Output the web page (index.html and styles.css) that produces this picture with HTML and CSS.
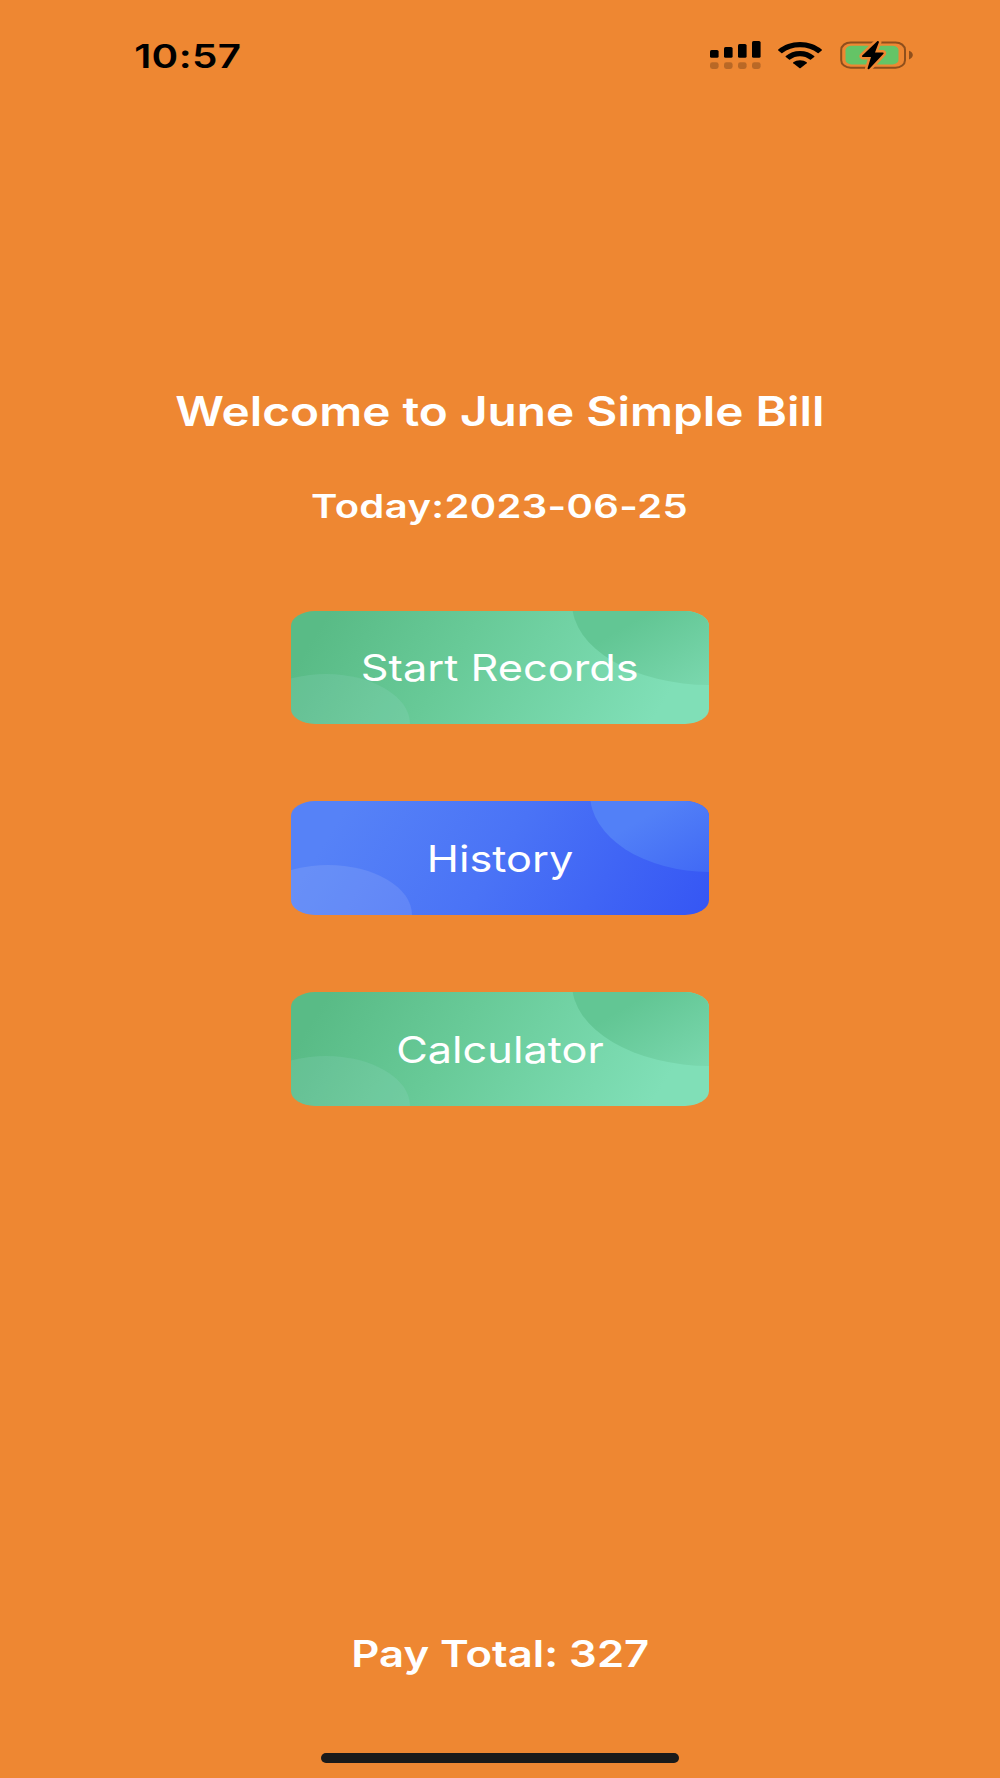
FILE: index.html
```html
<!DOCTYPE html>
<html lang="en">
<head>
<meta charset="utf-8">
<title>June Simple Bill</title>
<link rel="stylesheet" href="styles.css">
</head>
<body>
<div class="screen">
  <header class="status">
    <span class="wide time">10:57</span>
    <div class="status-icons">
      <svg class="signal" viewBox="0 0 51 28" width="51" height="28">
        <rect x="0" y="9" width="8.6" height="7.8" rx="1.6"/>
        <rect x="14" y="6" width="8.6" height="10.8" rx="1.6"/>
        <rect x="28" y="3" width="8.6" height="13.8" rx="1.6"/>
        <rect x="42" y="0" width="8.6" height="16.8" rx="1.6"/>
        <g opacity=".22">
          <rect x="0" y="21.2" width="8.6" height="6.800" rx="2.400"/>
          <rect x="14" y="21.2" width="8.6" height="6.800" rx="2.400"/>
          <rect x="28" y="21.2" width="8.6" height="6.800" rx="2.400"/>
          <rect x="42" y="21.2" width="8.6" height="6.800" rx="2.400"/>
        </g>
      </svg>
      <svg class="wifi" viewBox="0 0 44 27" width="44" height="27">
        <path d="M22 0C30.500 0 38.200 2.900 43.700 7.500Q44.300 8 43.700 8.500L40.700 11Q40.200 11.400 39.600 10.900C34.900 7.200 28.700 5.200 22 5.200S9.100 7.200 4.400 10.900Q3.800 11.400 3.300 11L.3 8.500Q-.3 8 .3 7.500C5.800 2.900 13.500 0 22 0Z"/>
        <path d="M22 9C27.600 9 32.500 10.900 36.200 14Q36.800 14.500 36.200 15L33 17.600Q32.500 18 31.900 17.600C29.100 15.500 25.700 14.300 22 14.300S14.900 15.500 12.100 17.600Q11.500 18 11 17.600L7.800 15Q7.200 14.500 7.800 14C11.500 10.900 16.400 9 22 9Z"/>
        <path d="M22 18.200C24.600 18.200 26.900 19 28.700 20.300Q29.300 20.800 28.700 21.300L22.700 26Q22 26.500 21.300 26L15.300 21.300Q14.700 20.800 15.300 20.300C17.100 19 19.400 18.200 22 18.200Z"/>
      </svg>
      <svg class="battery" viewBox="0 0 74 30" width="74" height="30">
        <rect x="1.200" y="2.400" width="63.800" height="25.400" rx="9.500" ry="7.600" fill="none" stroke="#8f4f1c" stroke-width="2"/>
        <path d="M69 10.800Q72.800 12.200 72.800 15.100T69 19.400Z" fill="#8f4f1c"/>
        <rect x="5.500" y="5.800" width="53" height="18.600" rx="6" ry="4.500" fill="#64c466"/>
        <path d="M37.500 1 22 15.800Q21.500 17 23 17H31L27.500 28.500Q28.200 29.800 29.200 29L43.500 13.800Q44.200 12.400 42.500 12.400H35L39 2Q38.500 .5 37.500 1Z" fill="#000" stroke="#ee8732" stroke-width="5" stroke-linejoin="round" paint-order="stroke"/>
      </svg>
    </div>
  </header>

  <main class="home">
    <h1 class="title"><span class="wide">Welcome to June Simple Bill</span></h1>
    <p class="today"><span class="wide">Today:2023-06-25</span></p>
    <nav class="actions">
      <button class="action green"><span class="wide">Start Records</span></button>
      <button class="action blue"><span class="wide">History</span></button>
      <button class="action green"><span class="wide">Calculator</span></button>
    </nav>
  </main>

  <footer class="footer">
    <p class="total"><span class="wide">Pay Total: 327</span></p>
    <div class="home-bar"></div>
  </footer>
</div>
</body>
</html>
```
FILE: styles.css
```css
* {
  box-sizing: border-box;
  margin: 0;
  padding: 0;
}

body {
  background: #ee8732;
  font-family: Inter, "Liberation Sans", sans-serif;
}

.screen {
  display: flex;
  flex-direction: column;
  height: 1778px;
  color: #fff;
}

.wide {
  display: inline-block;
  white-space: nowrap;
  transform: scaleX(1.18);
}

.status {
  display: flex;
  justify-content: space-between;
  align-items: flex-start;
  height: 112px;
  padding: 36px 86px 0 144px;
  color: #000;
}

.time {
  font-size: 33px;
  font-weight: 600;
  line-height: 40px;
  letter-spacing: 0.3px;
  transform: scaleX(1.225);
}

.status-icons {
  display: flex;
  padding-top: 4px;
}

.signal {
  margin: 1px 17px 0 0;
}

.wifi {
  margin: 2px 18px 0 0;
}

.home {
  display: flex;
  flex-direction: column;
  align-items: center;
  padding-top: 274px;
}

.title {
  font-size: 40.6px;
  font-weight: 600;
  line-height: 51px;
}

.title .wide {
  transform: scaleX(1.177);
}

.today {
  margin-top: 49px;
  font-size: 32.6px;
  font-weight: 600;
  line-height: 40px;
  letter-spacing: 0.3px;
}

.today .wide {
  transform: scaleX(1.228);
}

.actions {
  display: flex;
  flex-direction: column;
  gap: 77px;
  margin-top: 84.700px;
}

.action {
  position: relative;
  overflow: hidden;
  width: 418.600px;
  height: 113.800px;
  padding-top: 1.500px;
  border: 0;
  border-radius: 24px / 15px;
  color: #fff;
  font: 400 36.7px/46px Inter, "Liberation Sans", sans-serif;
}

.action .wide {
  position: relative;
  z-index: 1;
}

/* Decorative ellipses clipped by the button's corners */
.action::before,
.action::after {
  content: "";
  position: absolute;
  border-radius: 50%;
}

.action::before {
  left: -49px;
  top: 63.500px;
  width: 168px;
  height: 100px;
}

.action::after {
  left: 281px;
  top: -90px;
  width: 276px;
  height: 164px;
}

.green {
  background: linear-gradient(122deg, #59bb86 8%, #68ca98 40%, #80dfb7 88%);
}

.green::before {
  background: rgba(190, 230, 235, 0.12);
}

.green::after {
  background: linear-gradient(150deg, #62c694 42%, #7edab2 80%);
}

.blue {
  background: linear-gradient(122deg, #5682f7 12%, #4a73f6 50%, #3657f4 98%);
}

.blue::before {
  left: -47px;
  background: rgba(255, 255, 255, 0.11);
}

.blue::after {
  left: 299px;
  top: -85px;
  width: 240px;
  height: 156px;
  background: linear-gradient(150deg, #5280f7 45%, #4068f5 78%);
}

.footer {
  display: flex;
  flex-direction: column;
  align-items: center;
  margin-top: auto;
  padding-bottom: 15.500px;
}

.total {
  font-size: 37px;
  font-weight: 600;
  line-height: 46px;
}

.home-bar {
  width: 358px;
  height: 9.500px;
  margin-top: 76px;
  border-radius: 5px;
  background: #1a1a1a;
}
```
